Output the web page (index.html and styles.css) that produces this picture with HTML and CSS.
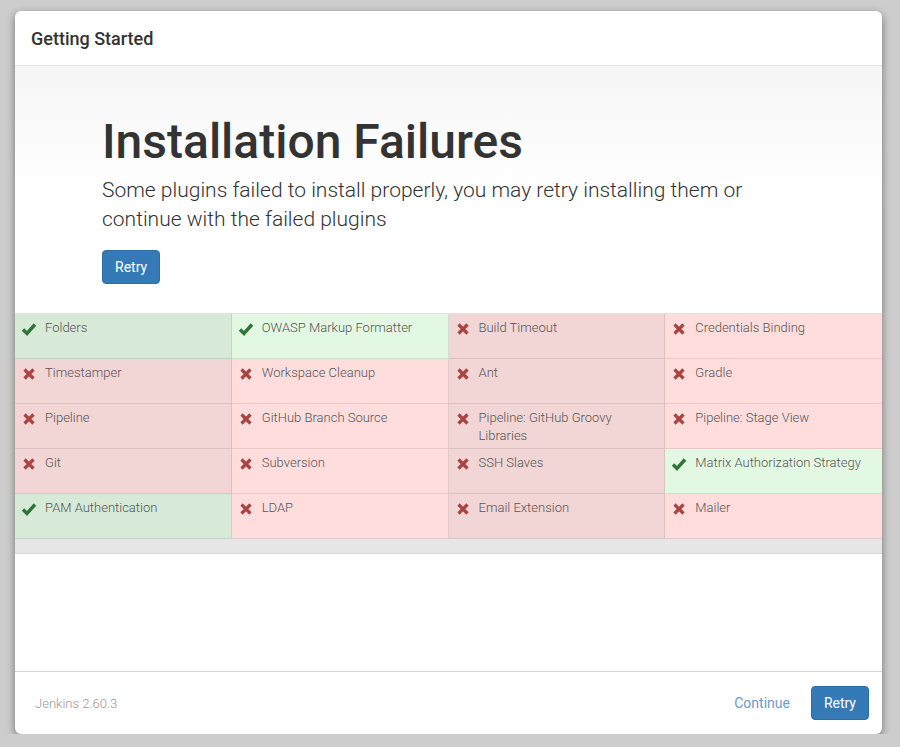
FILE: index.html
```html
<!DOCTYPE html>
<html lang="en">
<head>
  <meta charset="UTF-8">
  <title>Getting Started</title>
  <link rel="stylesheet" href="styles.css">
</head>
<body>
  <div class="dialog">
    <div class="dialog-header">
      <h4>Getting Started</h4>
    </div>

    <div class="dialog-body">
      <div class="jumbotron">
        <h1>Installation Failures</h1>
        <p>Some plugins failed to install properly, you may retry installing them or continue with the failed plugins</p>
        <button class="btn btn-primary">Retry</button>
      </div>

      <div class="plugins">
        <div class="plugin ok">
          <svg class="icon" viewBox="0 0 16 16"><path d="M2 8.5l4 4 8-9"/></svg>
          <span>Folders</span>
        </div>
        <div class="plugin ok">
          <svg class="icon" viewBox="0 0 16 16"><path d="M2 8.5l4 4 8-9"/></svg>
          <span>OWASP Markup Formatter</span>
        </div>
        <div class="plugin fail">
          <svg class="icon" viewBox="0 0 16 16"><path d="M3.5 3.5l9 9M12.5 3.5l-9 9"/></svg>
          <span>Build Timeout</span>
        </div>
        <div class="plugin fail">
          <svg class="icon" viewBox="0 0 16 16"><path d="M3.5 3.5l9 9M12.5 3.5l-9 9"/></svg>
          <span>Credentials Binding</span>
        </div>

        <div class="plugin fail">
          <svg class="icon" viewBox="0 0 16 16"><path d="M3.5 3.5l9 9M12.5 3.5l-9 9"/></svg>
          <span>Timestamper</span>
        </div>
        <div class="plugin fail">
          <svg class="icon" viewBox="0 0 16 16"><path d="M3.5 3.5l9 9M12.5 3.5l-9 9"/></svg>
          <span>Workspace Cleanup</span>
        </div>
        <div class="plugin fail">
          <svg class="icon" viewBox="0 0 16 16"><path d="M3.5 3.5l9 9M12.5 3.5l-9 9"/></svg>
          <span>Ant</span>
        </div>
        <div class="plugin fail">
          <svg class="icon" viewBox="0 0 16 16"><path d="M3.5 3.5l9 9M12.5 3.5l-9 9"/></svg>
          <span>Gradle</span>
        </div>

        <div class="plugin fail">
          <svg class="icon" viewBox="0 0 16 16"><path d="M3.5 3.5l9 9M12.5 3.5l-9 9"/></svg>
          <span>Pipeline</span>
        </div>
        <div class="plugin fail">
          <svg class="icon" viewBox="0 0 16 16"><path d="M3.5 3.5l9 9M12.5 3.5l-9 9"/></svg>
          <span>GitHub Branch Source</span>
        </div>
        <div class="plugin fail">
          <svg class="icon" viewBox="0 0 16 16"><path d="M3.5 3.5l9 9M12.5 3.5l-9 9"/></svg>
          <span>Pipeline: GitHub Groovy Libraries</span>
        </div>
        <div class="plugin fail">
          <svg class="icon" viewBox="0 0 16 16"><path d="M3.5 3.5l9 9M12.5 3.5l-9 9"/></svg>
          <span>Pipeline: Stage View</span>
        </div>

        <div class="plugin fail">
          <svg class="icon" viewBox="0 0 16 16"><path d="M3.5 3.5l9 9M12.5 3.5l-9 9"/></svg>
          <span>Git</span>
        </div>
        <div class="plugin fail">
          <svg class="icon" viewBox="0 0 16 16"><path d="M3.5 3.5l9 9M12.5 3.5l-9 9"/></svg>
          <span>Subversion</span>
        </div>
        <div class="plugin fail">
          <svg class="icon" viewBox="0 0 16 16"><path d="M3.5 3.5l9 9M12.5 3.5l-9 9"/></svg>
          <span>SSH Slaves</span>
        </div>
        <div class="plugin ok">
          <svg class="icon" viewBox="0 0 16 16"><path d="M2 8.5l4 4 8-9"/></svg>
          <span>Matrix Authorization Strategy</span>
        </div>

        <div class="plugin ok">
          <svg class="icon" viewBox="0 0 16 16"><path d="M2 8.5l4 4 8-9"/></svg>
          <span>PAM Authentication</span>
        </div>
        <div class="plugin fail">
          <svg class="icon" viewBox="0 0 16 16"><path d="M3.5 3.5l9 9M12.5 3.5l-9 9"/></svg>
          <span>LDAP</span>
        </div>
        <div class="plugin fail">
          <svg class="icon" viewBox="0 0 16 16"><path d="M3.5 3.5l9 9M12.5 3.5l-9 9"/></svg>
          <span>Email Extension</span>
        </div>
        <div class="plugin fail">
          <svg class="icon" viewBox="0 0 16 16"><path d="M3.5 3.5l9 9M12.5 3.5l-9 9"/></svg>
          <span>Mailer</span>
        </div>
      </div>
      <div class="plugins-end"></div>
    </div>

    <div class="dialog-footer">
      <span class="version">Jenkins 2.60.3</span>
      <div class="actions">
        <a class="btn btn-link" href="#">Continue</a>
        <button class="btn btn-primary">Retry</button>
      </div>
    </div>
  </div>
</body>
</html>
```

FILE: styles.css
```css
*{
  margin: 0;
  padding: 0;
  box-sizing: border-box;
}

body{
  background: #cdcdcd;
  font-family: Roboto, "Liberation Sans", sans-serif;
  color: #333;
  padding: 11px 18px 0 15px;
}

.dialog{
  width: 867px;
  height: 723px;
  background: #fff;
  border-radius: 6px;
  box-shadow: 0 3px 9px rgba(0,0,0,0.45);
  display: flex;
  flex-direction: column;
  overflow: hidden;
}

.dialog-header{
  height: 55px;
  padding: 0 16px;
  display: flex;
  align-items: center;
  border-bottom: 1px solid #e5e5e5;
}
.dialog-header h4{
  font-size: 18px;
  font-weight: 500;
  color: #333;
}

.dialog-body{
  flex: 1;
  display: flex;
  flex-direction: column;
}

/* 顶部大标题区 */
.jumbotron{
  height: 247px;
  padding: 48px 40px 0 87px;
  background: linear-gradient(to bottom, #f6f6f6 0%, #fdfdfd 40%, #fff 60%);
}
.jumbotron h1{
  font-size: 48px;
  font-weight: 500;
  line-height: 56px;
}
.jumbotron p{
  font-size: 21px;
  font-weight: 300;
  line-height: 29px;
  margin: 6px 0 16px;
  max-width: 680px;
}

.btn{
  display: inline-block;
  font-family: inherit;
  font-size: 14px;
  line-height: 20px;
  padding: 6px 12px;
  border: 1px solid transparent;
  border-radius: 4px;
  cursor: pointer;
  text-decoration: none;
}
.btn-primary{
  color: #fff;
  background: #337ab7;
  border-color: #2e6da4;
}
.btn-link{
  color: #6a9bd0;
}

/* 插件列表 */
.plugins{
  display: grid;
  grid-template-columns: repeat(4, 1fr);
  border-top: 1px solid #e3e3e3;
  box-shadow: 0 1px 2px rgba(0,0,0,0.15);
}
.plugin{
  height: 45px;
  display: flex;
  align-items: flex-start;
  padding: 5px 10px 0 6px;
  font-size: 13px;
  font-weight: 300;
  line-height: 18px;
  color: #555;
  border-right: 1px solid rgba(0,0,0,0.09);
  border-bottom: 1px solid rgba(0,0,0,0.09);
}
.plugin:nth-child(4n){
  border-right: none;
}
.plugin span{
  padding-left: 8px;
}
.icon{
  width: 16px;
  height: 16px;
  flex: none;
  margin-top: 2px;
  fill: none;
  stroke-width: 3.4;
}
.ok .icon{
  stroke: #2f7438;
}
.fail .icon{
  stroke: #a94442;
  stroke-width: 3.2;
}
.ok{
  background: #e3f8e3;
}
.fail{
  background: #ffdddd;
}
.plugin.ok:nth-child(2n+1){
  background: #d7ead7;
}
.plugin.fail:nth-child(2n+1){
  background: #f2d5d5;
}

.plugins-end{
  height: 15px;
  background: #e6e6e6;
  border-bottom: 1px solid #d9d9d9;
}

.dialog-footer{
  height: 63px;
  border-top: 1px solid #d5d5d5;
  padding: 0 13px 0 20px;
  display: flex;
  align-items: center;
  justify-content: space-between;
  margin-top: auto;
}
.version{
  font-size: 13px;
  font-weight: 300;
  color: #999;
}
.actions .btn-link{
  margin-right: 4px;
}
```
